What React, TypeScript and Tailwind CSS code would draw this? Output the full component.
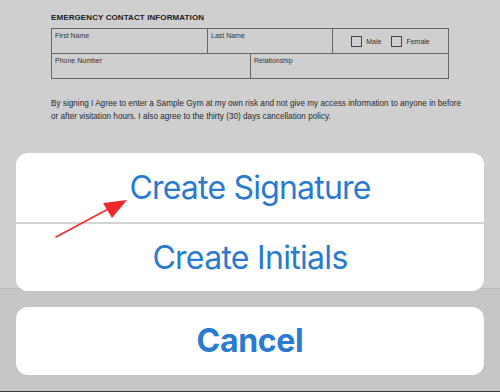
import React from "react";

function Checkbox({ label }: { label: string }) {
  return (
    <span className="flex items-center gap-[4px]">
      <span className="h-[11px] w-[11px] border border-[#444]" />
      <span>{label}</span>
    </span>
  );
}

function ContactForm() {
  return (
    <div className="px-[51px] pt-[13px] font-['Liberation_Sans',Arial,sans-serif] text-[#222]">
      <h2 className="text-[8px] font-bold leading-[10px] tracking-[0.1px] text-[#1a1a1a]">
        EMERGENCY CONTACT INFORMATION
      </h2>
      <div className="mt-[5px] w-[398px] border border-[#666] text-[7px] leading-[9px] text-[#333]">
        <div className="flex h-[25px] border-b border-[#666]">
          <div className="w-[156px] border-r border-[#666] px-[3px] pt-[2px]">First Name</div>
          <div className="w-[125px] border-r border-[#666] px-[3px] pt-[2px]">Last Name</div>
          <div className="flex flex-1 items-center justify-center gap-[10px] pt-[1px]">
            <Checkbox label="Male" />
            <Checkbox label="Female" />
          </div>
        </div>
        <div className="flex h-[24px]">
          <div className="w-[199px] border-r border-[#666] px-[3px] pt-[2px]">Phone Number</div>
          <div className="flex-1 px-[3px] pt-[2px]">Relationship</div>
        </div>
      </div>
      <p className="mt-[18px] w-[414px] text-[8.2px] leading-[13px] text-[#2a2a2a]">
        By signing I Agree to enter a Sample Gym at my own risk and not give my access information to anyone in before
        or after visitation hours. I also agree to the thirty (30) days cancellation policy.
      </p>
    </div>
  );
}

function Arrow() {
  return (
    <svg className="absolute left-0 top-0" width="500" height="392" viewBox="0 0 500 392">
      <line x1="56" y1="237" x2="112" y2="207" stroke="#f02a2a" strokeWidth="1.6" strokeLinecap="round" />
      <polygon points="127,200 103,203 112,218" fill="#f02a2a" />
    </svg>
  );
}

export default function App() {
  return (
    <div className="relative h-[392px] w-[500px] overflow-hidden bg-[#cfcfcf]">
      <div className="flex h-full flex-col">
        <div className="h-[288px]">
          <ContactForm />
        </div>
        <div className="flex-1 border-t border-[#bdbdbd] bg-[#c6c6c6]" />
        <div className="h-[1px] bg-[#3a3a3a]" />
      </div>

      {/* action sheet over the page */}
      <div className="absolute inset-x-[16px] top-[153px] flex flex-col gap-[16px] font-['Inter','Roboto',sans-serif] text-[#2a7bd0]">
        <div className="overflow-hidden rounded-[12px] bg-white">
          <button className="flex h-[69px] w-full items-center justify-center text-[32px] tracking-[-0.8px]">
            Create Signature
          </button>
          <div className="h-[2px] bg-[#d4d4d4]" />
          <button className="flex h-[67px] w-full items-center justify-center text-[32px] tracking-[-0.7px]">
            Create Initials
          </button>
        </div>
        <button className="flex h-[68px] w-full items-center justify-center rounded-[12px] bg-white text-[32px] font-bold tracking-[-0.3px]">
          Cancel
        </button>
      </div>
      <Arrow />
    </div>
  );
}
